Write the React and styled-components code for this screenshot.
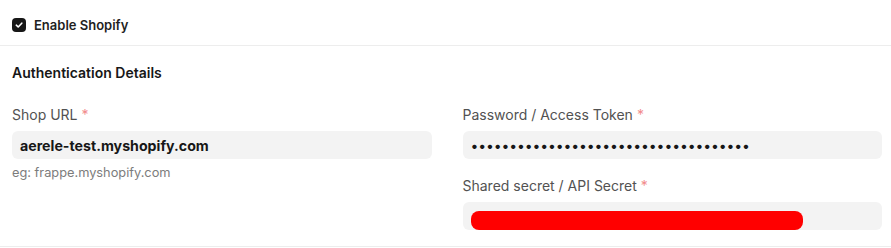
import React from 'react'
import styled, { createGlobalStyle } from 'styled-components'

const GlobalStyle = createGlobalStyle`
  body {
    margin: 0;
    background: #fff;
    font-family: Inter, "Noto Sans", sans-serif;
    color: #171717;
  }
`

const Page = styled.div`
  width: 891px;
  height: 248px;
  overflow: hidden;
`

const Section = styled.section`
  border-bottom: 1px solid #ededed;
  padding: ${p => p.$pad};
`

const CheckRow = styled.label`
  box-sizing: border-box;
  display: flex;
  align-items: center;
  gap: 8px;
  height: 45px;
  padding: 4px 0 0 12px;
  font-size: 13px;
  font-weight: 600;
  color: #1f1f1f;
`

const Box = styled.span`
  width: 14px;
  height: 14px;
  border-radius: 4px;
  background: #171717;
  display: flex;
  align-items: center;
  justify-content: center;
`

const Title = styled.h3`
  margin: 0 0 24px;
  font-size: 14px;
  line-height: 20px;
  font-weight: 600;
  color: #171717;
`

const Columns = styled.div`
  display: grid;
  grid-template-columns: 1fr 1fr;
  column-gap: 31px;
`

const Column = styled.div`
  display: flex;
  flex-direction: column;
  gap: 19px;
`

const Field = styled.div`
  display: flex;
  flex-direction: column;
`

const Label = styled.div`
  font-size: 14px;
  line-height: 16px;
  color: #525252;
  margin-bottom: 8px;
  span {
    color: #f28b8b;
    margin-left: 4px;
  }
`

const Input = styled.div`
  height: 28px;
  border-radius: 6px;
  background: #f3f3f3;
  padding: 0 8px;
  display: flex;
  align-items: ${p => (p.$bottom ? 'flex-end' : 'center')};
  font-size: ${p => (p.$bold ? '14.2px' : '14px')};
  font-weight: ${p => (p.$bold ? 700 : 400)};
  color: #171717;
  letter-spacing: ${p => (p.$dots ? '-0.12px' : '0')};
`

const Redact = styled.div`
  width: 332px;
  height: 19px;
  background: #ff0000;
  border-radius: 8px;
`

const Hint = styled.div`
  margin-top: 6px;
  font-size: 12.8px;
  line-height: 16px;
  color: #7c7c7c;
`

function FormField({ label, children, hint }) {
  return (
    <Field>
      <Label>
        {label}
        <span>*</span>
      </Label>
      {children}
      {hint && <Hint>{hint}</Hint>}
    </Field>
  )
}

export default function App() {
  return (
    <Page>
      <GlobalStyle />
      <Section $pad="0">
        <CheckRow>
          <Box>
            <svg width="10" height="10" viewBox="0 0 10 10" fill="none">
              <path d="M2.3 5.2 L4.2 7 L7.8 3.2" stroke="#fff" strokeWidth="1.6" strokeLinecap="round" strokeLinejoin="round" />
            </svg>
          </Box>
          Enable Shopify
        </CheckRow>
      </Section>
      <Section $pad="17px 9px 16px 12px">
        <Title>Authentication Details</Title>
        <Columns>
          <Column>
            <FormField label="Shop URL" hint="eg: frappe.myshopify.com">
              <Input $bold>aerele-test.myshopify.com</Input>
            </FormField>
          </Column>
          <Column>
            <FormField label="Password / Access Token">
              <Input $dots>{'•'.repeat(36)}</Input>
            </FormField>
            <FormField label="Shared secret / API Secret">
              <Input $bottom>
                <Redact />
              </Input>
            </FormField>
          </Column>
        </Columns>
      </Section>
    </Page>
  )
}
